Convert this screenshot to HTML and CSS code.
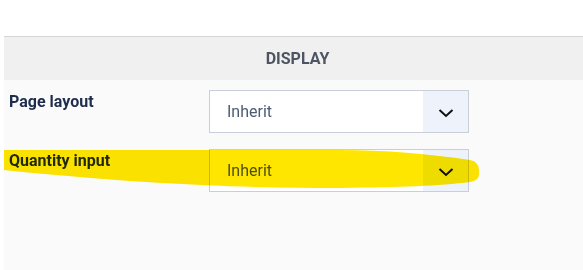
FILE: index.html
```html
<!DOCTYPE html>
<html lang="en">
<head>
    <meta charset="UTF-8">
    <title>Display</title>
    <link rel="stylesheet" href="styles.css">
</head>
<body>
    <div class="panel">
        <div class="panel-header">Display</div>
        <div class="panel-body">
            <div class="row">
                <label class="row-label">Page layout</label>
                <div class="select">
                    <span class="select-value">Inherit</span>
                    <span class="select-arrow">
                        <svg width="16" height="16" viewBox="0 0 16 16"><path d="M1.5 5 L8 11 L14.5 5" fill="none" stroke="#111" stroke-width="2"/></svg>
                    </span>
                </div>
            </div>
            <div class="row">
                <label class="row-label">Quantity input</label>
                <div class="select">
                    <span class="select-value">Inherit</span>
                    <span class="select-arrow">
                        <svg width="16" height="16" viewBox="0 0 16 16"><path d="M1.5 5 L8 11 L14.5 5" fill="none" stroke="#111" stroke-width="2"/></svg>
                    </span>
                </div>
            </div>
        </div>
        <!-- highlighter mark over the second row -->
        <svg class="marker" width="587" height="234" viewBox="4 36 587 234">
            <path d="M4 150 L340 150 C385 150 430 154 470 160 Q480 162 479 172 Q480 181 470 182 C440 186 400 187 340 188 C250 188 150 185 4 170 Z" fill="#ffe600"/>
        </svg>
    </div>
</body>
</html>
```

FILE: styles.css
```css
body {
    margin: 0;
    padding: 36px 0 0 4px;
    background: #fff;
    font-family: Roboto, "Liberation Sans", sans-serif;
    overflow: hidden;
}
.panel {
    position: relative;
    width: 587px;
    height: 234px;
    background: #fafafa;
    border-top: 1px solid #d6d6d6;
}
.panel-header {
    height: 43px;
    line-height: 43px;
    background: #f0f0f0;
    text-align: center;
    text-transform: uppercase;
    font-weight: bold;
    font-size: 16px;
    color: #4e5562;
}
.panel-body {
    padding-top: 10px;
    display: flex;
    flex-direction: column;
    gap: 16px;
}
.row {
    display: flex;
    align-items: flex-start;
}
.row-label {
    width: 200px;
    padding: 2px 0 0 5px;
    font-weight: bold;
    font-size: 16px;
    line-height: 20px;
    color: #1f2d4d;
}
.select {
    display: flex;
    width: 258px;
    height: 41px;
    border: 1px solid #c9ced8;
    background: #fff;
}
.select-value {
    flex: 1;
    padding-left: 17px;
    line-height: 41px;
    font-size: 16px;
    color: #4d5b73;
}
.select-arrow {
    width: 45px;
    display: flex;
    align-items: center;
    justify-content: center;
    background: #eef3fb;
    padding-top: 3px;
    box-sizing: border-box;
}
.marker {
    position: absolute;
    left: 0;
    top: -1px;
    mix-blend-mode: multiply;
    pointer-events: none;
}
```
